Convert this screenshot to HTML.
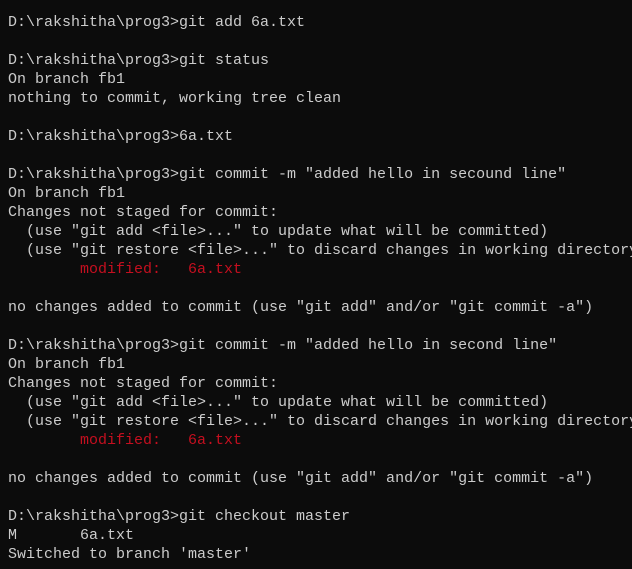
<html><head><style>
body{margin:0;background:#0c0c0c;width:632px;height:569px;overflow:hidden}
pre{margin:0;padding:13px 0 0 8px;font-family:"Liberation Mono",monospace;font-size:15px;line-height:19px;color:#cccccc;white-space:pre}
.r{color:#c50f1f}
</style></head><body><pre>D:\rakshitha\prog3>git add 6a.txt

D:\rakshitha\prog3>git status
On branch fb1
nothing to commit, working tree clean

D:\rakshitha\prog3>6a.txt

D:\rakshitha\prog3>git commit -m "added hello in secound line"
On branch fb1
Changes not staged for commit:
  (use "git add &lt;file&gt;..." to update what will be committed)
  (use "git restore &lt;file&gt;..." to discard changes in working directory)
        <span class="r">modified:   6a.txt</span>

no changes added to commit (use "git add" and/or "git commit -a")

D:\rakshitha\prog3>git commit -m "added hello in second line"
On branch fb1
Changes not staged for commit:
  (use "git add &lt;file&gt;..." to update what will be committed)
  (use "git restore &lt;file&gt;..." to discard changes in working directory)
        <span class="r">modified:   6a.txt</span>

no changes added to commit (use "git add" and/or "git commit -a")

D:\rakshitha\prog3>git checkout master
M       6a.txt
Switched to branch 'master'</pre></body></html>
